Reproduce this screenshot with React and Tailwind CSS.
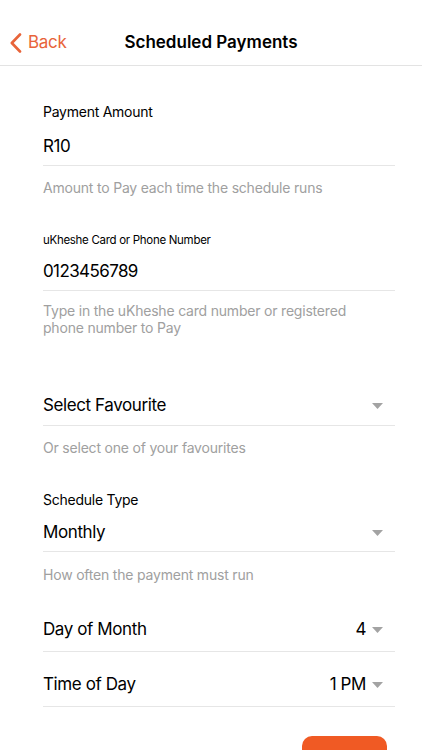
import React from 'react';

const font = { fontFamily: 'Inter, "Noto Sans", sans-serif' };

function Caret() {
  return (
    <svg className="w-[11px] h-[6px] flex-shrink-0" viewBox="0 0 11 6">
      <path d="M0 0h11L5.5 6z" fill="#a3a3a3" />
    </svg>
  );
}

function Helper({ children, className = '' }) {
  return (
    <p className={`text-[14px] leading-[17px] tracking-[-0.2px] text-[#a0a0a0] ${className}`}>{children}</p>
  );
}

function SelectRow({ label, value, height = 'h-[40px]', className = '' }) {
  return (
    <div className={`flex items-center border-b border-[#e6e6e6] ${height} ${className}`}>
      <span className="flex-1 text-[17px] tracking-[-0.4px] text-black">{label}</span>
      {value && <span className="text-[17px] tracking-[-0.4px] text-black mr-[6px]">{value}</span>}
      <span className="mr-[12px]">
        <Caret />
      </span>
    </div>
  );
}

export default function App() {
  return (
    <div className="w-[422px] min-h-[750px] bg-white" style={font}>
      {/* Nav bar */}
      <div className="pt-[20px] border-b border-[#e3e3e3]">
        <div className="relative h-[45px] flex items-center justify-center">
          <div className="absolute left-[10px] top-0 h-full flex items-center gap-[6px] text-[#e8643a]">
            <svg className="w-[12px] h-[20px]" viewBox="0 0 12 20" fill="none">
              <path d="M10 1.5L1.8 10L10 18.5" stroke="#e8643a" strokeWidth="2.6" strokeLinecap="round" strokeLinejoin="round" />
            </svg>
            <span className="text-[17px] tracking-[-0.3px]">Back</span>
          </div>
          <h1 className="text-[17px] font-semibold text-black">Scheduled Payments</h1>
        </div>
      </div>

      <div className="pl-[43px] pr-[27px]">
        {/* Payment amount */}
        <p className="mt-[36px] text-[14px] leading-[20px] tracking-[-0.25px] text-black">Payment Amount</p>
        <div className="mt-[6px] h-[38px] flex items-center border-b border-[#e6e6e6]">
          <span className="text-[17px] tracking-[-0.4px] text-black">R10</span>
        </div>
        <Helper className="mt-[13px]">Amount to Pay each time the schedule runs</Helper>

        {/* Card / phone */}
        <p className="mt-[36px] text-[11.5px] leading-[16px] tracking-[-0.3px] text-black">
          uKheshe Card or Phone Number
        </p>
        <div className="mt-[5px] h-[38px] flex items-center border-b border-[#e6e6e6]">
          <span className="text-[17px] tracking-[-0.6px] text-black">0123456789</span>
        </div>
        <Helper className="mt-[11px]">
          Type in the uKheshe card number or registered
          <br />
          phone number to Pay
        </Helper>

        {/* Favourite */}
        <SelectRow label="Select Favourite" className="mt-[50px]" />
        <Helper className="mt-[13px]">Or select one of your favourites</Helper>

        {/* Schedule type */}
        <p className="mt-[34px] text-[14px] leading-[20px] tracking-[-0.25px] text-black">Schedule Type</p>
        <SelectRow label="Monthly" height="h-[38px]" className="mt-[4px]" />
        <Helper className="mt-[14px]">How often the payment must run</Helper>

        <SelectRow label="Day of Month" value="4" height="h-[44px]" className="mt-[25px]" />
        <SelectRow label="Time of Day" value="1 PM" height="h-[44px]" className="mt-[11px]" />

        {/* Submit button, only its top edge is in view */}
        <div className="mt-[29px] flex justify-end pr-[8px]">
          <button aria-label="Save" className="w-[85px] h-[44px] rounded-[10px] bg-[#f05a24]" />
        </div>
      </div>
    </div>
  );
}
